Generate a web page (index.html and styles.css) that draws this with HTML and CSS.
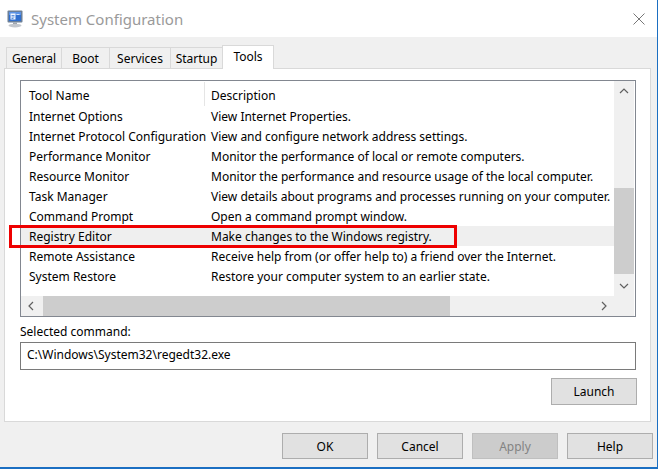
FILE: index.html
```html
<!DOCTYPE html>
<html>
<head>
<meta charset="utf-8">
<title>System Configuration</title>
<link rel="stylesheet" href="styles.css">
</head>
<body>
<div class="window">
  <div class="titlebar">
    <svg class="app-icon" viewBox="0 0 17 18" width="17" height="18">
      <rect x="0.5" y="0.5" width="15" height="12" rx="1" fill="#6b7f98"/>
      <rect x="2" y="2" width="12" height="9" fill="#2f6fd0"/>
      <rect x="2" y="2" width="12" height="3" fill="#5b93e6"/>
      <rect x="3.5" y="3.5" width="5" height="6" fill="#f4f8ff"/>
      <path d="M4.5 5.5h3M4.5 7h3M4.5 8.5h2" stroke="#3a78d4" stroke-width="0.8"/>
      <rect x="9.5" y="4" width="3" height="1" fill="#cfe0fa"/>
      <rect x="6" y="12.5" width="4" height="2" fill="#9aa1aa"/>
      <ellipse cx="8" cy="15.6" rx="6.5" ry="1.8" fill="#c3c7cd"/>
    </svg>
    <span class="title">System Configuration</span>
    <div class="close">
      <svg width="12" height="12" viewBox="0 0 12 12"><path d="M0.5 0.5L11.5 11.5M11.5 0.5L0.5 11.5" stroke="#777" stroke-width="1"/></svg>
    </div>
  </div>

  <div class="tabs">
    <div class="tab tab-general">General</div>
    <div class="tab tab-boot">Boot</div>
    <div class="tab tab-services">Services</div>
    <div class="tab tab-startup">Startup</div>
    <div class="tab tab-tools active">Tools</div>
  </div>

  <div class="panel">
    <div class="listbox">
      <div class="list-content">
        <div class="row header"><div class="c1">Tool Name</div><div class="c2">Description</div></div>
        <div class="row"><div class="c1">Internet Options</div><div class="c2">View Internet Properties.</div></div>
        <div class="row"><div class="c1">Internet Protocol Configuration</div><div class="c2">View and configure network address settings.</div></div>
        <div class="row"><div class="c1">Performance Monitor</div><div class="c2">Monitor the performance of local or remote computers.</div></div>
        <div class="row"><div class="c1">Resource Monitor</div><div class="c2">Monitor the performance and resource usage of the local computer.</div></div>
        <div class="row"><div class="c1">Task Manager</div><div class="c2">View details about programs and processes running on your computer.</div></div>
        <div class="row"><div class="c1">Command Prompt</div><div class="c2">Open a command prompt window.</div></div>
        <div class="row selected"><div class="c1">Registry Editor</div><div class="c2">Make changes to the Windows registry.</div></div>
        <div class="row"><div class="c1">Remote Assistance</div><div class="c2">Receive help from (or offer help to) a friend over the Internet.</div></div>
        <div class="row"><div class="c1">System Restore</div><div class="c2">Restore your computer system to an earlier state.</div></div>
      </div>
      <div class="vscroll">
        <div class="sbtn"><svg width="20" height="20" viewBox="0 0 20 20"><path d="M6 12L10 8L14 12" fill="none" stroke="#606060" stroke-width="1.2"/></svg></div>
        <div class="vtrack"><div class="vthumb"></div></div>
        <div class="sbtn"><svg width="20" height="20" viewBox="0 0 20 20"><path d="M6 8L10 12L14 8" fill="none" stroke="#606060" stroke-width="1.2"/></svg></div>
      </div>
      <div class="hscroll">
        <div class="sbtn"><svg width="20" height="20" viewBox="0 0 20 20"><path d="M12 6L8 10L12 14" fill="none" stroke="#606060" stroke-width="1.2"/></svg></div>
        <div class="htrack"><div class="hthumb"></div></div>
        <div class="sbtn"><svg width="20" height="20" viewBox="0 0 20 20"><path d="M8 6L12 10L8 14" fill="none" stroke="#606060" stroke-width="1.2"/></svg></div>
      </div>
      <div class="corner"></div>
      <div class="highlight-box"></div>
    </div>

    <div class="field-label">Selected command:</div>
    <div class="textbox">C:\Windows\System32\regedt32.exe</div>
    <div class="launch-row"><button class="btn launch">Launch</button></div>
  </div>

  <div class="footer">
    <button class="btn">OK</button>
    <button class="btn">Cancel</button>
    <button class="btn disabled">Apply</button>
    <button class="btn">Help</button>
  </div>
</div>
</body>
</html>
```

FILE: styles.css
```css
* { box-sizing: border-box; }

body {
  margin: 0;
  background: #fff;
  font-family: "Noto Sans", "Open Sans", sans-serif;
  font-size: 12px;
  color: #000;
}

.window {
  width: 658px;
  height: 469px;
  background: #f0f0f0;
  border-right: 1px solid #1b6fc2;
  border-bottom: 2px solid #1b6fc2;
  display: flex;
  flex-direction: column;
}

.titlebar {
  height: 37px;
  flex: none;
  background: #fff;
  display: flex;
  align-items: center;
  padding-left: 7px;
}

.app-icon { flex: none; margin-top: 1px; }

.title {
  margin-left: 7px;
  font-size: 15px;
  color: #9a9a9a;
}

.close {
  margin-left: auto;
  width: 36px;
  height: 37px;
  display: flex;
  align-items: center;
  justify-content: center;
}

.tabs {
  display: flex;
  align-items: flex-end;
  height: 23px;
  margin-top: 8px;
  padding-left: 6px;
  flex: none;
}

.tab {
  height: 21px;
  line-height: 21px;
  text-align: center;
  border: 1px solid #d9d9d9;
  border-bottom: none;
  background: #f0f0f0;
  margin-left: -1px;
  white-space: nowrap;
}
.tab:first-child { margin-left: 0; }
.tab-general { width: 56px; }
.tab-boot { width: 49px; }
.tab-services { width: 62px; }
.tab-startup { width: 53px; }
.tab-tools { width: 52px; }

.tab.active {
  height: 24px;
  line-height: 22px;
  margin-bottom: -1px;
  background: #fff;
  position: relative;
  z-index: 1;
}

.panel {
  margin-left: 4px;
  width: 647px;
  height: 354px;
  flex: none;
  background: #fff;
  border: 1px solid #d9d9d9;
  padding: 11px 13px 0 15px;
}

.listbox {
  position: relative;
  width: 616px;
  height: 237px;
  border: 1px solid #828790;
  padding-right: 1px;
  display: grid;
  grid-template-columns: 1fr 20px;
  grid-template-rows: 1fr 20px;
}

.list-content {
  overflow: hidden;
  white-space: nowrap;
}

.row {
  display: flex;
  height: 20px;
  line-height: 22px;
  overflow: hidden;
}

.row .c1 {
  width: 184px;
  flex: none;
  padding-left: 8px;
}

.row .c2 { padding-left: 6px; }

.row.header {
  height: 25px;
  line-height: 25px;
  padding-top: 2px;
}
.row.header .c1 {
  width: 184px;
  border-right: 1px solid #e5e5e5;
  margin-top: -1px;
  padding-top: 1px;
}
.row.header .c2 { padding-left: 6px; }

.row.selected { background: #efefef; }

.vscroll {
  background: #f0f0f0;
  display: flex;
  flex-direction: column;
}

.sbtn {
  width: 20px;
  height: 20px;
  flex: none;
}
.sbtn svg { display: block; }

.vtrack { flex: 1; }
.vthumb {
  margin-top: 87px;
  height: 86px;
  background: #cdcdcd;
}

.hscroll {
  background: #f0f0f0;
  display: flex;
}
.htrack { flex: 1; }
.hthumb {
  margin-left: 2px;
  width: 407px;
  height: 20px;
  background: #cdcdcd;
}

.corner { background: #f0f0f0; }

.highlight-box {
  position: absolute;
  left: -12px;
  top: 144px;
  width: 448px;
  height: 23px;
  border: 3px solid #ee0000;
  pointer-events: none;
}

.field-label {
  margin-top: 5px;
  line-height: 19px;
  height: 16px;
}

.textbox {
  margin-top: 4px;
  width: 616px;
  height: 28px;
  border: 1px solid #7a7a7a;
  padding-left: 6px;
  line-height: 24px;
}

.launch-row {
  display: flex;
  justify-content: flex-end;
  margin-top: 8px;
}

.btn {
  width: 86px;
  height: 26px;
  background: #e1e1e1;
  border: 1px solid #adadad;
  font-family: inherit;
  font-size: 12px;
  color: #000;
  padding: 0;
}

.btn.launch { height: 27px; }

.btn.disabled {
  background: #cccccc;
  border-color: #bfbfbf;
  color: #838383;
}

.footer {
  display: flex;
  justify-content: flex-end;
  gap: 9px;
  margin-top: 11px;
  padding-right: 4px;
}
```
